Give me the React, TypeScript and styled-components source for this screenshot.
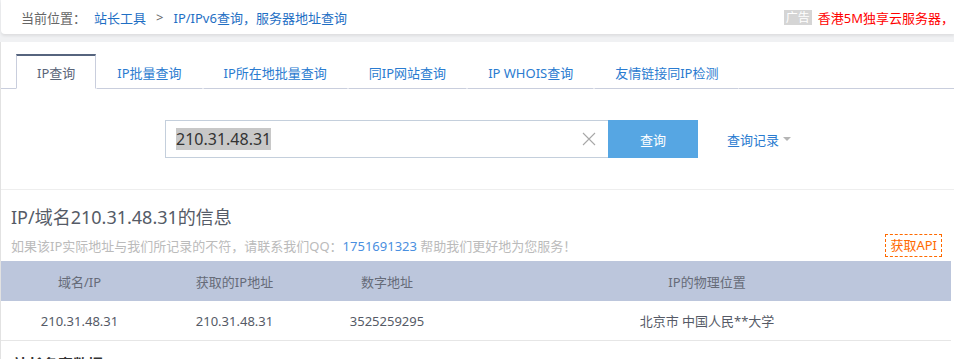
import styled, { createGlobalStyle } from "styled-components"

const GlobalStyle = createGlobalStyle`
    html, body {
        margin: 0;
        padding: 0;
        background: #f0f1f3;
        overflow: hidden;
    }
    body {
        font-family: "Noto Sans", "Noto Sans CJK SC", sans-serif;
        width: 954px;
    }
    * {
        box-sizing: border-box;
    }
`

const Page = styled.div`
    width: 954px;
    height: 359px;
    overflow: hidden;
`

const TopBar = styled.div`
    height: 34px;
    margin: 0 0 8px 1px;
    background: #fff;
    border-radius: 0 0 0 4px;
    box-shadow: 0 2px 3px rgba(0, 0, 0, 0.08);
    display: flex;
    align-items: center;
    justify-content: space-between;
    padding-left: 20px;
    font-size: 13px;
    white-space: nowrap;
    overflow: hidden;
`

const Crumbs = styled.div`
    display: flex;
    align-items: center;
    color: #666;
`

const CrumbLink = styled.a<{ $gap?: number }>`
    color: #1f6fc4;
    text-decoration: none;
    margin-left: ${(p) => p.$gap ?? 0}px;
`

const CrumbSep = styled.span`
    color: #666;
    margin: 0 10px;
`

const Ad = styled.div`
    display: flex;
    align-items: center;
    gap: 6px;
`

const AdTag = styled.span`
    background: #d5d5d5;
    color: #fff;
    font-size: 12px;
    line-height: 15px;
    padding: 0 2px;
`

const AdText = styled.span`
    color: #f00;
    font-size: 13px;
`

const Card = styled.div`
    background: #fff;
    border-left: 1px solid #e2e2e2;
`

const Tabs = styled.div`
    display: flex;
    padding: 12px 0 0 15px;
    border-bottom: 1px solid #c9cedd;
`

const Tab = styled.div<{ $active?: boolean }>`
    height: 35px;
    padding: 0 20px;
    display: flex;
    align-items: center;
    font-size: 13px;
    white-space: nowrap;
    margin-bottom: -1px;
    color: ${(p) => (p.$active ? "#5a6478" : "#2a7bd0")};
    background: #fff;
    border-top: 2px solid ${(p) => (p.$active ? "#56647e" : "transparent")};
    border-left: 1px solid ${(p) => (p.$active ? "#c9cedd" : "transparent")};
    border-right: 1px solid ${(p) => (p.$active ? "#c9cedd" : "transparent")};
    border-bottom: 1px solid ${(p) => (p.$active ? "#fff" : "#c9cedd")};
`

const SearchArea = styled.div`
    display: flex;
    align-items: center;
    padding: 31px 0 31px 164px;
    border-bottom: 1px solid #eeeeee;
`

const InputBox = styled.div`
    width: 443px;
    height: 38px;
    border: 1px solid #c4cfdc;
    border-right: none;
    display: flex;
    align-items: center;
    justify-content: space-between;
    padding: 0 12px 0 10px;
`

const InputValue = styled.span`
    font-size: 16px;
    color: #333;
    background: #c8c8c8;
    line-height: 22px;
`

const SearchButton = styled.button`
    width: 90px;
    height: 38px;
    border: none;
    background: #56a6e3;
    color: #fff;
    font-family: inherit;
    font-size: 13px;
    cursor: pointer;
`

const History = styled.div`
    margin-left: 29px;
    display: flex;
    align-items: center;
    gap: 4px;
    color: #2a7bd0;
    font-size: 13px;
`

const Caret = styled.span`
    width: 0;
    height: 0;
    border-left: 4px solid transparent;
    border-right: 4px solid transparent;
    border-top: 4px solid #b5b5b5;
`

const Info = styled.div`
    padding: 14px 12px 4px 10px;
`

const Title = styled.h2`
    margin: 0;
    font-size: 18px;
    font-weight: normal;
    line-height: 26px;
    color: #555b67;
`

const NoteRow = styled.div`
    display: flex;
    align-items: center;
    justify-content: space-between;
    margin-top: 4px;
`

const Note = styled.span`
    font-size: 13px;
    color: #bbbbbb;
`

const QQ = styled.span`
    color: #4a8fe0;
`

const ApiButton = styled.span`
    border: 1px dashed #ff6a00;
    color: #ff6a00;
    font-size: 13px;
    padding: 2px 4px;
    line-height: 17px;
`

const Table = styled.div`
    display: grid;
    grid-template-columns: 157px 153px 152px 1fr;
    margin-right: 3px;
`

const Cell = styled.div<{ $head?: boolean }>`
    height: 40px;
    display: flex;
    align-items: center;
    justify-content: center;
    font-size: 13px;
    color: ${(p) => (p.$head ? "#666b78" : "#555a66")};
    background: ${(p) => (p.$head ? "#bcc6dc" : "#fff")};
    border-bottom: ${(p) => (p.$head ? "none" : "1px solid #e6e6e6")};
`

const NextTitle = styled.div`
    padding: 12px 0 0 12px;
    display: flex;
    align-items: baseline;
    gap: 8px;
    white-space: nowrap;
`

const NextMain = styled.span`
    font-size: 15px;
    font-weight: bold;
    color: #333;
`

const NextSub = styled.span`
    font-size: 12px;
    color: #999;
`

const tabs = ["IP查询", "IP批量查询", "IP所在地批量查询", "同IP网站查询", "IP WHOIS查询", "友情链接同IP检测"]

const App: React.FC = () => {
    return (
        <Page>
            <GlobalStyle />
            <TopBar>
                <Crumbs>
                    当前位置：
                    <CrumbLink $gap={8}>站长工具</CrumbLink>
                    <CrumbSep>&gt;</CrumbSep>
                    <CrumbLink>IP/IPv6查询，服务器地址查询</CrumbLink>
                </Crumbs>
                <Ad>
                    <AdTag>广告</AdTag>
                    <AdText>香港5M独享云服务器，</AdText>
                </Ad>
            </TopBar>
            <Card>
                <Tabs>
                    {tabs.map((t, i) => (
                        <Tab key={t} $active={i === 0}>
                            {t}
                        </Tab>
                    ))}
                </Tabs>
                <SearchArea>
                    <InputBox>
                        <InputValue>210.31.48.31</InputValue>
                        <svg width="14" height="14" viewBox="0 0 14 14">
                            <path d="M1 1 L13 13 M13 1 L1 13" stroke="#a8a8a8" strokeWidth="1.1" fill="none" />
                        </svg>
                    </InputBox>
                    <SearchButton>查询</SearchButton>
                    <History>
                        查询记录
                        <Caret />
                    </History>
                </SearchArea>
                <Info>
                    <Title>IP/域名210.31.48.31的信息</Title>
                    <NoteRow>
                        <Note>
                            如果该IP实际地址与我们所记录的不符，请联系我们QQ：<QQ>1751691323</QQ> 帮助我们更好地为您服务！
                        </Note>
                        <ApiButton>获取API</ApiButton>
                    </NoteRow>
                </Info>
                <Table>
                    <Cell $head>域名/IP</Cell>
                    <Cell $head>获取的IP地址</Cell>
                    <Cell $head>数字地址</Cell>
                    <Cell $head>IP的物理位置</Cell>
                    <Cell>210.31.48.31</Cell>
                    <Cell>210.31.48.31</Cell>
                    <Cell>3525259295</Cell>
                    <Cell>北京市 中国人民**大学</Cell>
                </Table>
                <NextTitle>
                    <NextMain>站长备案数据</NextMain>
                    <NextSub>(输入到站长数据)</NextSub>
                </NextTitle>
            </Card>
        </Page>
    )
}

export default App
